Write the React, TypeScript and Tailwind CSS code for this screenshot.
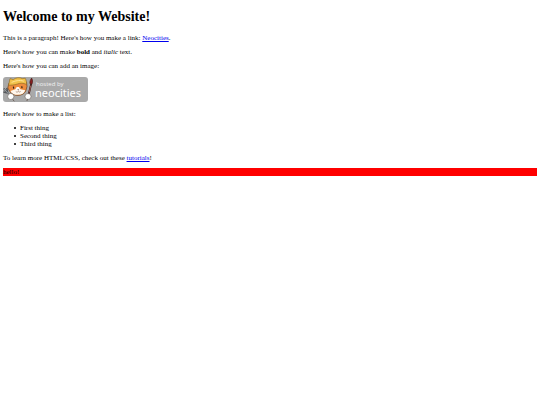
import type { ReactNode } from 'react'

const things = ['First thing', 'Second thing', 'Third thing']

function TextLink({ href, children }: { href: string; children: ReactNode }) {
  return (
    <a href={href} className="text-[#0000ee] underline">
      {children}
    </a>
  )
}

function NeocitiesBadge() {
  return (
    <svg
      viewBox="0 0 85 25"
      role="img"
      aria-label="Hosted by Neocities"
      className="block h-[25px] w-[85px]"
    >
      <rect width="85" height="25" rx="3" fill="#a9a9a9" />

      {/* fork */}
      <path d="M0.8 11.5l3.4 4M3.8 10.8l.8 4.2M0.5 15l4 1M4.5 15.5L8 20" stroke="#55585c" strokeWidth="1.6" fill="none" />
      <path d="M1.2 12l6.3 7.2" stroke="#c4c8cc" strokeWidth="0.6" />

      {/* brush */}
      <path d="M28.2 7L25.5 18" stroke="#3d1715" strokeWidth="1.8" />
      <path d="M27.8 8.5L26.2 15.5" stroke="#b8756a" strokeWidth="0.8" />
      <path d="M27 6.8c-.6-2.7.8-4.4 1.6-5.8 1.2 1.8 1.3 4.2.3 6.2z" fill="#8a1f20" stroke="#3d1715" strokeWidth="0.6" />

      {/* head */}
      <path
        d="M5.8 6.5L4.8 11l1.9 3.2c1.5 2.7 4.5 4.3 8.3 4.2 4-.1 6.6-1.8 7.8-4.6L24 9.5 23.5 5z"
        fill="#ee8c3c"
        stroke="#6b4020"
        strokeWidth="0.7"
      />
      <path d="M13.7 10l2.2 0 1.4 2.2 4.9 1c-1 3-3.2 4.5-7.2 4.6-3.6 0-6.5-1.3-7.6-3.9l5-1.6z" fill="#fff7ed" />
      <path d="M10.4 9.6l.3 2.1M18.8 9.2l.2 2.1" stroke="#30221b" strokeWidth="1.2" />
      <path d="M14.2 12.5h2l-.9 1z" fill="#50302a" />
      <path d="M12.8 14.6c.9.7 1.7.6 2.5-.2.8.8 1.6.8 2.4 0" stroke="#74422f" strokeWidth="0.5" fill="none" />

      {/* hat */}
      <path
        d="M5.6 8.2L7 1.6l3.2 1C13 .6 16.6.1 19.3 1.6l2.9-.4c1 1.9 1.5 4 1.3 6.2-3.5-1.5-6-1.5-9-.4-3.4 1.1-6 1.2-8.9 1.2z"
        fill="#f2c24b"
        stroke="#89631f"
        strokeWidth="0.6"
      />
      <path d="M8.6 5.4C12 4.1 16 2.6 20.8 4.2" stroke="#ffe596" strokeWidth="1" fill="none" />

      {/* paws */}
      <circle cx="7.8" cy="19.5" r="3.1" fill="#fff" stroke="#5a5048" strokeWidth="0.5" />
      <circle cx="25" cy="19.5" r="3" fill="#fff" stroke="#5a5048" strokeWidth="0.5" />
      <path d="M9.5 22.3l1.8 1.7M24.5 22.3l-.6 1.6" stroke="#5a4a42" strokeWidth="0.9" />

      <text x="33" y="9" fill="#f1f1f1" fontSize="6" className="font-['Open_Sans',sans-serif]">
        hosted by
      </text>
      <text x="32" y="20" fill="#fff" fontSize="11" className="font-['Noto_Sans',sans-serif]">
        neocities
      </text>
    </svg>
  )
}

export default function App() {
  return (
    <main className="px-[3px] pt-[9px] font-['Liberation_Serif',serif] text-[7px] leading-2 text-black">
      <h1 className="text-[14px] leading-4 font-bold">Welcome to my Website!</h1>

      <div className="mt-[9px] space-y-1.5">
        <p>
          This is a paragraph! Here's how you make a link:{' '}
          <TextLink href="https://neocities.org">Neocities</TextLink>.
        </p>
        <p>
          Here's how you can make <strong>bold</strong> and <em>italic</em> text.
        </p>
        <p>Here's how you can add an image:</p>
      </div>

      <div className="mt-[7px] mb-2">
        <NeocitiesBadge />
      </div>

      <div className="space-y-1.5">
        <p>Here's how to make a list:</p>
        <ul className="pl-[11px]">
          {things.map((thing) => (
            <li
              key={thing}
              className="flex items-center gap-1 before:size-[2px] before:rounded-full before:bg-black"
            >
              {thing}
            </li>
          ))}
        </ul>
        <p>
          To learn more HTML/CSS, check out these{' '}
          <TextLink href="https://neocities.org/tutorials">tutorials</TextLink>!
        </p>
        <div className="bg-[#ff0000]">hello!</div>
      </div>
    </main>
  )
}
